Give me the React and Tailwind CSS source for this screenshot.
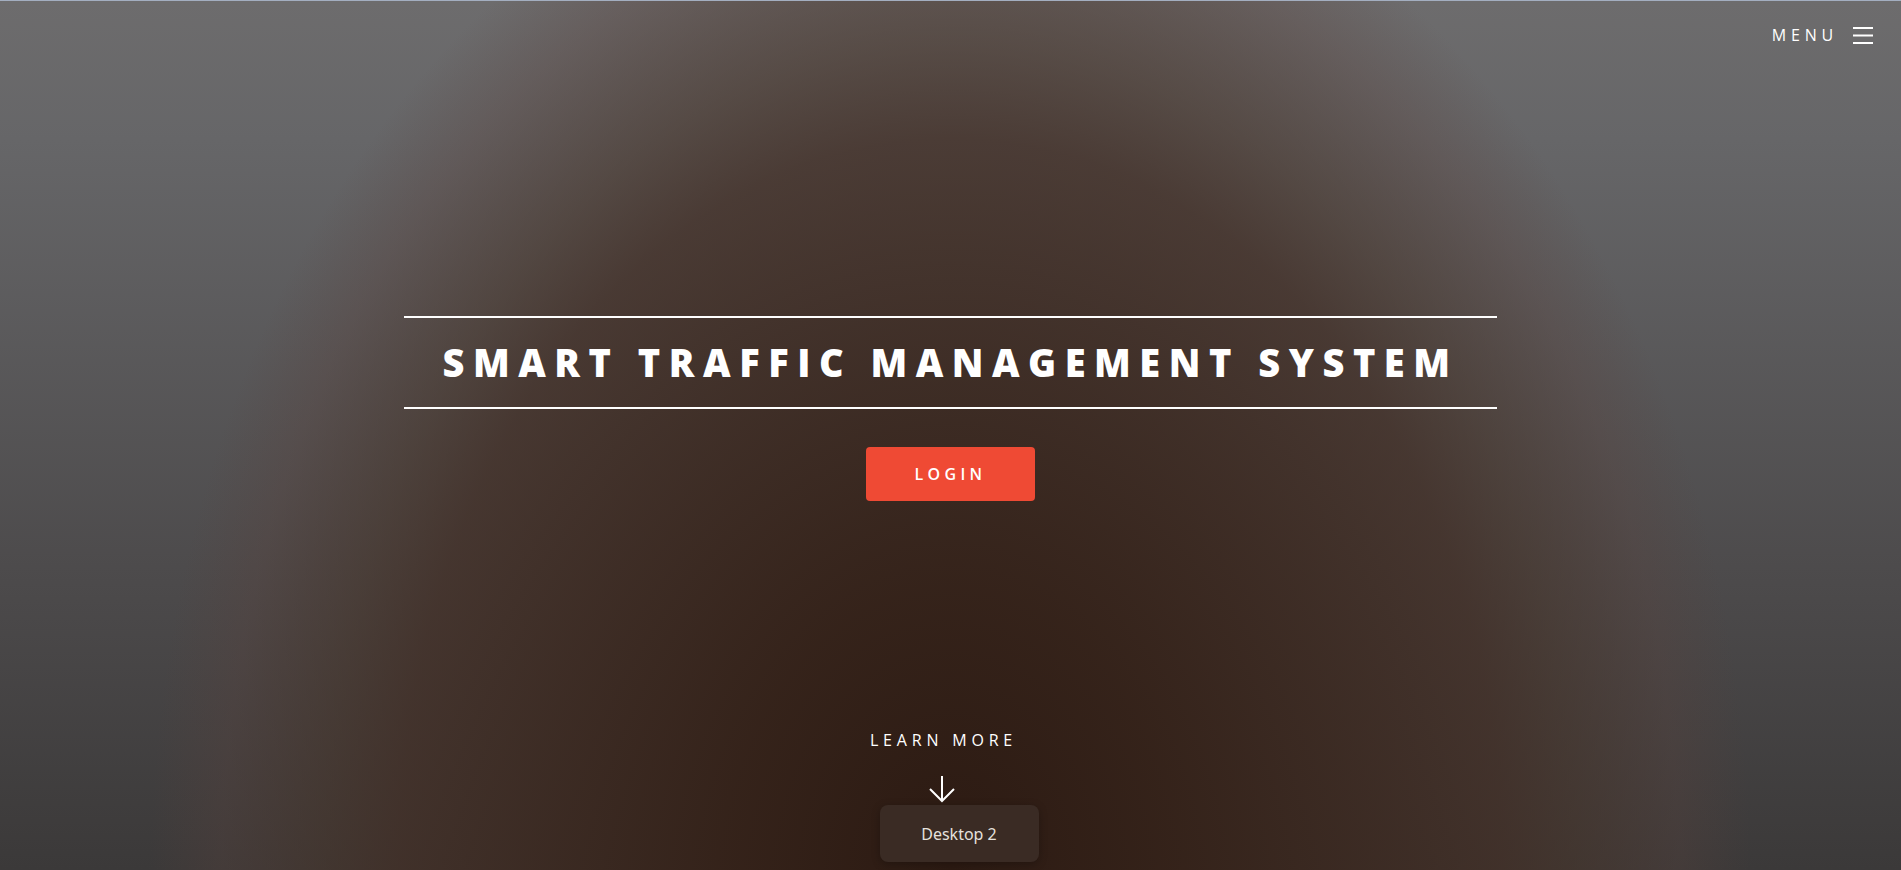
export default function App() {
  return (
    <div className="relative h-[870px] w-full overflow-hidden border-t border-[#a3aec0] bg-[radial-gradient(ellipse_800px_1060px_at_50%_100%,#2c1a12_0%,rgba(52,33,24,0.95)_27%,rgba(66,46,37,0.75)_69%,rgba(71,51,40,0.55)_78%,rgba(88,64,58,0.3)_91%,rgba(100,90,88,0)_100%),linear-gradient(to_bottom,#6d6c6d_0%,#666668_16%,#4c4a4b_67%,#3b3939_100%)] font-['Open_Sans',sans-serif] text-white">
      {/* Header */}
      <header className="flex justify-end pt-[22px] pr-[28px]">
        <a href="#" className="flex items-center gap-[15px] text-[16px] leading-6 uppercase tracking-[0.3em]">
          <span>Menu</span>
          <svg width="20" height="17" viewBox="0 0 20 17" className="block">
            <rect x="0" y="0" width="20" height="2" fill="#fff" />
            <rect x="0" y="7.5" width="20" height="2" fill="#fff" />
            <rect x="0" y="15" width="20" height="2" fill="#fff" />
          </svg>
        </a>
      </header>

      {/* Banner */}
      <section className="flex flex-col items-center">
        <h2 className="mt-[269px] border-y-2 border-white px-[38px] text-[38px] font-extrabold uppercase leading-[89px] tracking-[0.224em]">
          Smart Traffic Management System
        </h2>
        <a
          href="#"
          className="mt-[38px] flex h-[54px] w-[169px] items-center justify-center rounded-[4px] bg-[#ef4a34] text-[16px] font-semibold uppercase tracking-[0.27em] text-white"
        >
          Login
        </a>

        <a href="#" className="mt-[227px] mr-[14px] flex flex-col items-center text-[16px] uppercase leading-6 tracking-[0.3em]">
          <span>Learn More</span>
        </a>
        <svg width="28" height="28" viewBox="0 0 28 28" className="mt-[23px] mr-[18px]">
          <path d="M14 1 V26 M2 14 L14 26 L26 14" fill="none" stroke="#fff" strokeWidth="2" />
        </svg>
      </section>

      {/* Taskbar tooltip */}
      <div className="absolute left-1/2 top-[804px] ml-[-71px] flex h-[57px] w-[159px] items-center justify-center rounded-[8px] bg-[#3a2b24] font-['Noto_Sans',sans-serif] text-[16px] text-[#e6e1dd] shadow-[0_2px_8px_rgba(0,0,0,0.25)]">
        Desktop 2
      </div>
    </div>
  );
}
